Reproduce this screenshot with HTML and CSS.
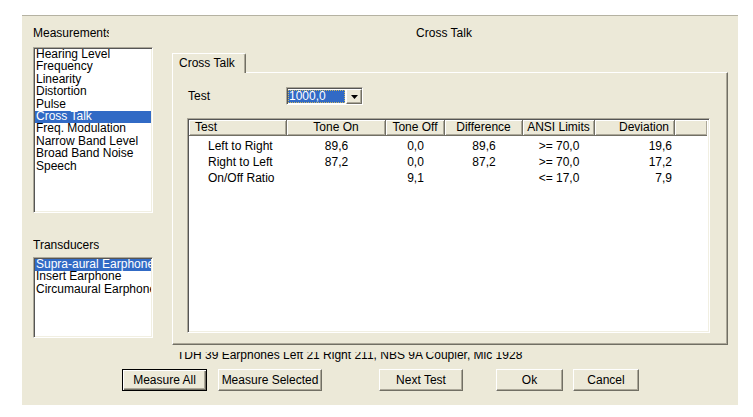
FILE: index.html
```html
<!DOCTYPE html>
<html>
<head>
<meta charset="utf-8">
<title>Cross Talk</title>
<link rel="stylesheet" href="styles.css">
</head>
<body>
<div class="dialog">
  <div class="main">
    <div class="side">
      <div class="label label-meas">Measurements</div>
      <ul class="listbox lb-meas">
        <li>Hearing Level</li>
        <li>Frequency</li>
        <li>Linearity</li>
        <li>Distortion</li>
        <li>Pulse</li>
        <li class="selected">Cross Talk</li>
        <li>Freq. Modulation</li>
        <li>Narrow Band Level</li>
        <li>Broad Band Noise</li>
        <li>Speech</li>
      </ul>
      <div class="label label-trans">Transducers</div>
      <ul class="listbox lb-trans">
        <li class="selected">Supra-aural Earphone</li>
        <li>Insert Earphone</li>
        <li>Circumaural Earphone</li>
      </ul>
    </div>
    <div class="content">
      <div class="title">Cross Talk</div>
      <div class="tabs"><div class="tab">Cross Talk</div></div>
      <div class="panel">
        <div class="test-row">
          <span class="test-label">Test</span>
          <div class="combo">
            <span class="combo-value"><span class="sel">1000,0</span></span>
            <span class="combo-btn"><svg width="7" height="4" viewBox="0 0 7 4"><path d="M0 0h7L3.5 4z" fill="#000"/></svg></span>
          </div>
        </div>
        <div class="listview">
          <div class="lv-header">
            <div class="hc al-l">Test</div>
            <div class="hc al-c">Tone On</div>
            <div class="hc al-c">Tone Off</div>
            <div class="hc al-c">Difference</div>
            <div class="hc al-c">ANSI Limits</div>
            <div class="hc al-r">Deviation</div>
            <div class="hc filler"></div>
          </div>
          <div class="lv-body">
            <div class="lv-row">
              <div class="c name">Left to Right</div>
              <div class="c al-c">89,6</div>
              <div class="c al-c">0,0</div>
              <div class="c al-c">89,6</div>
              <div class="c al-c">&gt;= 70,0</div>
              <div class="c al-r">19,6</div>
            </div>
            <div class="lv-row">
              <div class="c name">Right to Left</div>
              <div class="c al-c">87,2</div>
              <div class="c al-c">0,0</div>
              <div class="c al-c">87,2</div>
              <div class="c al-c">&gt;= 70,0</div>
              <div class="c al-r">17,2</div>
            </div>
            <div class="lv-row">
              <div class="c name">On/Off Ratio</div>
              <div class="c al-c"></div>
              <div class="c al-c">9,1</div>
              <div class="c al-c"></div>
              <div class="c al-c">&lt;= 17,0</div>
              <div class="c al-r">7,9</div>
            </div>
          </div>
        </div>
      </div>
      <div class="info"><span>TDH 39 Earphones Left 21 Right 211, NBS 9A Coupler, Mic 1928</span></div>
    </div>
  </div>
  <div class="buttons">
    <button class="btn btn-default b-all">Measure All</button>
    <button class="btn b-sel">Measure Selected</button>
    <button class="btn b-next">Next Test</button>
    <button class="btn b-ok">Ok</button>
    <button class="btn b-cancel">Cancel</button>
  </div>
</div>
</body>
</html>
```

FILE: styles.css
```css
* { box-sizing: border-box; }

html, body {
  margin: 0;
  padding: 0;
  background: #ffffff;
}

body {
  font-family: "Liberation Sans", Arial, sans-serif;
  font-size: 12px;
  color: #000;
}

.dialog {
  margin: 15px 0 0 22px;
  width: 716px;
  height: 390px;
  background: #ece9d8;
  border-top: 1px solid #b5b2a2;
  display: flex;
  flex-direction: column;
}

.main {
  display: flex;
}

/* ---------- left column ---------- */
.side {
  width: 138px;
  padding: 10px 0 0 11px;
  display: flex;
  flex-direction: column;
}

.label {
  line-height: 14px;
  height: 14px;
  white-space: nowrap;
  overflow: hidden;
}

.label-meas { width: 76px; }
.label-trans { width: 66px; margin-top: 25px; }

.listbox {
  list-style: none;
  margin: 0;
  width: 120px;
  background: #fff;
  border-style: solid;
  border-width: 1px;
  border-color: #aca899 #ffffff #ffffff #aca899;
  box-shadow: inset 1px 1px 0 #555, inset -1px -1px 0 #f1efe2;
  padding: 1px 1px 0 1px;
  overflow: hidden;
}

.lb-meas { margin-top: 7px; height: 166px; }
.lb-trans { margin-top: 5px; height: 81px; }

.listbox li {
  height: 12.4px;
  line-height: 10px;
  padding-left: 1px;
  white-space: nowrap;
  overflow: hidden;
}

.listbox li.selected {
  background: #316ac5;
  color: #fff;
}

/* ---------- right column ---------- */
.content {
  flex: 1;
  padding: 10px 10px 0 0;
  display: flex;
  flex-direction: column;
}

.title {
  line-height: 14px;
  height: 14px;
  text-align: center;
}

.tabs {
  margin: 13px 0 0 12px;
  display: flex;
}

.tab {
  position: relative;
  z-index: 1;
  width: 74px;
  height: 20px;
  margin-bottom: -1px;
  padding: 2px 0 0 6px;
  line-height: 14px;
  background: #ece9d8;
  border-top: 1px solid #fff;
  border-left: 1px solid #fff;
  border-right: 1px solid #716f64;
  border-top-right-radius: 2px;
  box-shadow: inset -1px 0 0 #aca899;
}

.panel {
  margin-left: 12px;
  height: 273px;
  border-style: solid;
  border-width: 1px;
  border-color: #fff #716f64 #716f64 #fff;
  box-shadow: inset -1px -1px 0 #aca899;
  padding: 14px 0 0 14px;
  display: flex;
  flex-direction: column;
}

.test-row {
  display: flex;
  align-items: center;
  height: 18px;
}

.test-label {
  width: 99px;
  padding-left: 1px;
}

.combo {
  width: 77px;
  height: 18px;
  display: flex;
  background: #fff;
  border-style: solid;
  border-width: 1px;
  border-color: #aca899 #fff #fff #aca899;
  box-shadow: inset 1px 1px 0 #555;
  padding: 1px 0 0 1px;
}

.combo-value {
  flex: 1;
  padding: 1px 1px 1px 0;
  display: flex;
}

.sel {
  flex: 1;
  background: #316ac5;
  color: #fff;
  line-height: 12px;
  outline: 1px dotted #c9b867;
  outline-offset: -1px;
  padding-left: 1px;
}

.combo-btn {
  width: 16px;
  background: #ece9d8;
  border-style: solid;
  border-width: 1px;
  border-color: #fff #716f64 #716f64 #fff;
  box-shadow: inset -1px -1px 0 #aca899;
  display: flex;
  align-items: center;
  justify-content: center;
}

.listview {
  margin-top: 13px;
  width: 523px;
  height: 215px;
  background: #fff;
  border-style: solid;
  border-width: 1px;
  border-color: #aca899 #fff #fff #aca899;
  box-shadow: inset 1px 1px 0 #555, inset -1px -1px 0 #f1efe2;
  padding: 1px 2px 2px 1px;
}

.lv-header,
.lv-row {
  display: grid;
  grid-template-columns: 98px 99px 59px 78px 72px 80px 1fr;
}

.lv-header {
  height: 16px;
}

.hc {
  background: #ece9d8;
  line-height: 14px;
  white-space: nowrap;
  overflow: hidden;
  border-right: 1px solid #716f64;
  border-bottom: 1px solid #716f64;
  box-shadow: inset 1px 1px 0 #fff, inset -1px -1px 0 #aca899;
}

.hc.al-l { padding-left: 6px; }
.hc.al-c { text-align: center; }
.hc.al-r { text-align: right; padding-right: 5px; }
.hc.filler { border-right: none; }

.lv-body {
  padding-top: 2px;
}

.lv-row {
  height: 16px;
  line-height: 16px;
}

.c { white-space: nowrap; }
.c.name { padding-left: 19px; }
.c.al-c { text-align: center; }
.c.al-r { text-align: right; padding-right: 3px; }

.info {
  margin: 7px 0 0 17px;
  height: 10px;
  overflow: hidden;
  white-space: nowrap;
}

.info span {
  display: block;
  margin-top: -4px;
  line-height: 14px;
}

/* ---------- buttons ---------- */
.buttons {
  display: flex;
  margin-top: 7px;
  padding-left: 100px;
}

.btn {
  font-family: "Liberation Sans", Arial, sans-serif;
  font-size: 12px;
  color: #000;
  height: 22px;
  padding: 0;
  margin: 0;
  background: #ece9d8;
  border-style: solid;
  border-width: 1px;
  border-color: #fff #716f64 #716f64 #fff;
  box-shadow: inset -1px -1px 0 #aca899;
  border-radius: 0;
}

.btn-default {
  border: 1px solid #000;
  box-shadow: inset 1px 1px 0 #fff, inset -1px -1px 0 #716f64, inset -2px -2px 0 #aca899;
}

.b-all { width: 85px; }
.b-sel { width: 104px; margin-left: 11px; }
.b-next { width: 84px; margin-left: 57px; }
.b-ok { width: 67px; margin-left: 33px; }
.b-cancel { width: 66px; margin-left: 10px; }
```
